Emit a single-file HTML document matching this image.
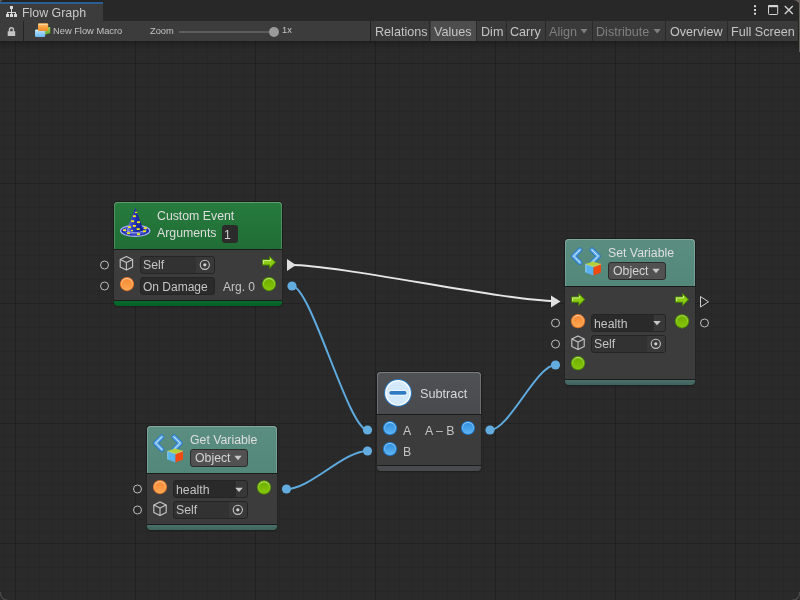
<!DOCTYPE html>
<html><head><meta charset="utf-8"><style>
*{margin:0;padding:0;box-sizing:border-box}
html,body{width:800px;height:600px;overflow:hidden;background:#282828;font-family:"Liberation Sans",sans-serif}
.a{position:absolute}
.tx{position:absolute;white-space:nowrap;will-change:transform}
#canvas{position:absolute;left:0;top:41px;width:800px;height:559px;background-color:#2a2a2a;
 background-image:
  linear-gradient(to right,#212121 1px,transparent 1px),
  linear-gradient(to bottom,#212121 1px,transparent 1px),
  linear-gradient(to right,#272727 1px,transparent 1px),
  linear-gradient(to bottom,#272727 1px,transparent 1px);
 background-size:120px 120px,120px 120px,12px 12px,12px 12px;
 background-position:15px 22px,15px 22px,3px 10px,3px 10px;}
.node{position:absolute;border-radius:4px;box-shadow:0 0 1px 0 rgba(0,0,0,.5),0 1px 2px 0 rgba(0,0,0,.25)}
.hdr{position:absolute;left:0;top:0;width:100%;border-radius:4px 4px 0 0;box-shadow:0 0 0 1px rgba(18,18,18,.5),inset 0 1px 0 rgba(255,255,255,.25),inset 1px 0 0 rgba(255,255,255,.2),inset -1px 0 0 rgba(255,255,255,.2)}
.body{position:absolute;left:0;width:100%;background:#3c3c3c;border-top:1px solid #1c1c1c;border-bottom:1px solid #1c1c1c}
.field{position:absolute;border-radius:3px;border:1px solid #252525}
.btn{position:absolute;top:21px;height:20px;background:#3a3a3a}
</style></head><body>
<div id="canvas"></div>
<div class="a" style="left:0;top:0;width:800px;height:21px;background:#282828"></div>
<div class="a" style="left:0;top:0;width:103px;height:2px;background:#242424"></div>
<div class="a" style="left:0;top:2px;width:103px;height:19px;background:#3c3c3c;border-top:2px solid #2c5f91"></div>
<svg class="a" style="left:0;top:0" width="800" height="8"><path d="M0 0 H4 A4 4 0 0 0 0 4 Z" fill="#67625e"/><path d="M800 0 H793 A7 7 0 0 1 800 7 Z" fill="#67625e"/></svg>
<div class="a" style="left:0;top:21px;width:800px;height:20px;background:#3c3c3c"></div>
<div class="a" style="left:0;top:41px;width:800px;height:10px;background:linear-gradient(rgba(0,0,0,.28),rgba(0,0,0,.12) 40%,rgba(0,0,0,0))"></div>
<div class="tx" style="left:22px;top:6.00px;font-size:12.4px;line-height:15px;color:#c8c8c8;">Flow Graph</div>
<svg class="a" style="left:0;top:0" width="20" height="20" viewBox="0 0 20 20">
 <g fill="#d8d8d8">
  <rect x="10" y="6" width="3" height="3"/><rect x="11" y="9" width="1" height="3"/>
  <rect x="7" y="12" width="9" height="1"/>
  <rect x="7" y="12" width="1" height="2"/><rect x="11" y="12" width="1" height="2"/><rect x="15" y="12" width="1" height="2"/>
  <rect x="6" y="14" width="3" height="3"/><rect x="10" y="14" width="3" height="3"/><rect x="14" y="14" width="3" height="3"/>
 </g>
</svg>
<svg class="a" style="left:740px;top:0" width="60" height="21" viewBox="0 0 60 21">
 <g fill="#d4d4d4"><rect x="14" y="5.2" width="2" height="2"/><rect x="14" y="9" width="2" height="2"/><rect x="14" y="12.7" width="2" height="2"/></g>
 <rect x="28.5" y="5.5" width="9.2" height="9" rx="0.8" fill="none" stroke="#d4d4d4" stroke-width="1"/>
 <rect x="28.3" y="5" width="9.6" height="2.2" fill="#d4d4d4"/>
 <path d="M44.8 6 L52.8 14 M52.8 6 L44.8 14" stroke="#d4d4d4" stroke-width="1.3"/>
</svg>
<div class="a" style="left:23px;top:21px;width:1px;height:20px;background:#232323"></div>
<svg class="a" style="left:0;top:20px" width="24" height="20" viewBox="0 0 24 20">
 <path d="M9.52 11.4 V9.6 A1.93 1.93 0 0 1 13.38 9.6 V11.4" fill="none" stroke="#c4c4c4" stroke-width="1.45"/>
 <rect x="7.7" y="11.2" width="7.5" height="4.8" fill="#c4c4c4"/>
</svg>
<svg class="a" style="left:30px;top:20px" width="24" height="20" viewBox="0 0 24 20">
 <defs>
  <linearGradient id="mO" x1="0" y1="0" x2="0" y2="1"><stop offset="0" stop-color="#ffc068"/><stop offset="1" stop-color="#f08a20"/></linearGradient>
  <linearGradient id="mB" x1="0" y1="0" x2="0" y2="1"><stop offset="0" stop-color="#c0e4ff"/><stop offset="1" stop-color="#6ab8f4"/></linearGradient>
  <linearGradient id="mG" x1="0" y1="0" x2="0" y2="1"><stop offset="0" stop-color="#a8dc60"/><stop offset="1" stop-color="#5ea828"/></linearGradient>
 </defs>
 <path d="M14.5 8 L20.2 7 V13.2 L14.5 14.8 Z" fill="url(#mG)"/>
 <rect x="5" y="9.4" width="10.2" height="7.6" rx="1.2" fill="url(#mB)"/>
 <path d="M5.5 10.6 H14.6" stroke="#e0f2ff" stroke-width="0.8"/>
 <rect x="8" y="3.2" width="10.2" height="7.8" rx="1.2" fill="url(#mO)"/>
 <path d="M8.6 4.6 H17.6" stroke="#ffe0b0" stroke-width="0.8"/>
</svg>
<div class="tx" style="left:53.3px;top:26.08px;font-size:9.3px;line-height:11px;color:#c4c4c4;">New Flow Macro</div>
<div class="tx" style="left:150px;top:26.08px;font-size:9.3px;line-height:11px;color:#c4c4c4;">Zoom</div>
<div class="a" style="left:179px;top:31px;width:94px;height:2px;background:#5c5c5c"></div>
<div class="a" style="left:269px;top:27px;width:10px;height:10px;background:#9a9a9a;border-radius:50%"></div>
<div class="tx" style="left:281.8px;top:25.28px;font-size:9.3px;line-height:11px;color:#c4c4c4;">1x</div>
<div class="a" style="left:370px;top:21px;width:1px;height:20px;background:#232323"></div>
<div class="btn" style="left:371px;width:58px;background:#3a3a3a"></div>
<div class="a" style="left:429px;top:21px;width:1px;height:20px;background:#2a2a2a"></div>
<div class="tx" style="left:374.7px;top:24.73px;font-size:12.6px;line-height:15px;color:#c4c4c4;">Relations</div>
<div class="btn" style="left:431px;width:45px;background:#4d4d4d"></div>
<div class="a" style="left:476px;top:21px;width:1px;height:20px;background:#2a2a2a"></div>
<div class="tx" style="left:434.4px;top:24.73px;font-size:12.6px;line-height:15px;color:#c4c4c4;">Values</div>
<div class="btn" style="left:477px;width:29px;background:#3a3a3a"></div>
<div class="a" style="left:506px;top:21px;width:1px;height:20px;background:#2a2a2a"></div>
<div class="tx" style="left:481.0px;top:24.73px;font-size:12.6px;line-height:15px;color:#c4c4c4;">Dim</div>
<div class="btn" style="left:507px;width:38px;background:#3a3a3a"></div>
<div class="a" style="left:545px;top:21px;width:1px;height:20px;background:#2a2a2a"></div>
<div class="tx" style="left:509.79999999999995px;top:24.73px;font-size:12.6px;line-height:15px;color:#c4c4c4;">Carry</div>
<div class="btn" style="left:546px;width:46px;background:#3a3a3a"></div>
<div class="a" style="left:592px;top:21px;width:1px;height:20px;background:#2a2a2a"></div>
<div class="tx" style="left:549.0px;top:24.73px;font-size:12.6px;line-height:15px;color:#7f7f7f;">Align</div>
<div class="btn" style="left:593px;width:72px;background:#3a3a3a"></div>
<div class="a" style="left:665px;top:21px;width:1px;height:20px;background:#2a2a2a"></div>
<div class="tx" style="left:595.8px;top:24.73px;font-size:12.6px;line-height:15px;color:#7f7f7f;">Distribute</div>
<div class="btn" style="left:666px;width:61px;background:#3a3a3a"></div>
<div class="a" style="left:727px;top:21px;width:1px;height:20px;background:#2a2a2a"></div>
<div class="tx" style="left:669.9px;top:24.73px;font-size:12.6px;line-height:15px;color:#c4c4c4;">Overview</div>
<div class="btn" style="left:728px;width:70px;background:#3a3a3a"></div>
<div class="a" style="left:798px;top:21px;width:1px;height:20px;background:#2a2a2a"></div>
<div class="tx" style="left:730.9px;top:24.73px;font-size:12.6px;line-height:15px;color:#c4c4c4;">Full Screen</div>
<div class="a" style="left:799px;top:4px;width:1px;height:48px;background:#67635f"></div>
<div class="a" style="left:798px;top:21px;width:1px;height:31px;background:#232323"></div>
<svg class="a" style="left:0;top:0" width="800" height="600"><path d="M791.5 600 A7 7 0 0 0 799.5 592" fill="none" stroke="#4a4a4a" stroke-width="1.2"/><path d="M0.5 592 A7 7 0 0 0 7.5 600" fill="none" stroke="#4a4a4a" stroke-width="1.2"/></svg>
<svg class="a" style="left:0;top:0" width="800" height="42"><path d="M580.5 29 H587.5 L584 33.5 Z M653.5 29 H660.8 L657.2 33.5 Z" fill="#7f7f7f"/></svg>
<svg class="a" style="left:0;top:0" width="800" height="600" viewBox="0 0 800 600">
 <path d="M291 265 C 340 265, 506 301, 555 301" fill="none" stroke="#e6e6e6" stroke-width="2"/>
 <path d="M292 286 C 311 286, 348.5 430, 367.5 430" fill="none" stroke="#5fabe0" stroke-width="2"/>
 <path d="M286.5 489 C 310.5 489, 343.5 451, 367.5 451" fill="none" stroke="#5fabe0" stroke-width="2"/>
 <path d="M490 430 C 509 430, 536.5 365, 555.5 365" fill="none" stroke="#5fabe0" stroke-width="2"/>
 <g fill="#62ace0">
 <circle cx="292" cy="286" r="4.6"/><circle cx="367.5" cy="430" r="4.6"/><circle cx="286.5" cy="489" r="4.6"/>
 <circle cx="367.5" cy="451" r="4.6"/><circle cx="490" cy="430" r="4.6"/><circle cx="555.5" cy="365" r="4.6"/>
 </g>
 <path d="M287 259 L296 265 L287 271 Z" fill="#e0e0e0"/>
 <path d="M551 295.5 L560.5 301.5 L551 307.5 Z" fill="#e0e0e0"/>
 <path d="M700.5 296.5 L708.5 301.8 L700.5 307 Z" fill="none" stroke="#cfcfcf" stroke-width="1"/>
 <g fill="none" stroke="#bdbdbd" stroke-width="1">
  <circle cx="104.5" cy="265" r="4"/><circle cx="104.5" cy="286" r="4"/>
  <circle cx="555.5" cy="323" r="4"/><circle cx="555.5" cy="344" r="4"/>
  <circle cx="704.5" cy="323" r="4"/>
  <circle cx="137.5" cy="489" r="4"/><circle cx="137.5" cy="510" r="4"/>
 </g>
</svg>
<div class="node" style="left:114px;top:202px;width:168px;height:104px"><div class="hdr" style="height:47px;background:linear-gradient(#277b3d,#206e36)"></div><div class="body" style="top:47px;height:52px"></div><div class="a" style="left:0;top:99px;width:100%;height:5px;background:linear-gradient(#066c2d,#036027);border-radius:0 0 4px 4px"></div></div>
<div class="tx" style="left:157px;top:209.24px;font-size:12.3px;line-height:15px;color:#dedede;">Custom Event</div>
<div class="tx" style="left:157px;top:226.24px;font-size:12.3px;line-height:15px;color:#dedede;">Arguments</div>
<div class="a" style="left:222px;top:225px;width:16px;height:18px;background:#2b2b2b;border-radius:3px"></div>
<div class="tx" style="left:224px;top:228.24px;font-size:12.3px;line-height:15px;color:#d0d0d0;">1</div>
<div class="field" style="left:140px;top:256px;width:75px;height:18px;background:#323232"></div>
<div class="a" style="left:196px;top:257px;width:18px;height:16px;background:#393939;border-radius:0 2px 2px 0"></div>
<div class="tx" style="left:142.6px;top:258.04px;font-size:12.3px;line-height:15px;color:#c4c4c4;">Self</div>
<div class="field" style="left:140px;top:277px;width:75px;height:18px;background:#2b2b2b"></div>
<div class="tx" style="left:142.9px;top:279.84px;font-size:12px;line-height:14px;color:#c4c4c4;">On Damage</div>
<div class="tx" style="left:223.3px;top:280.14px;font-size:12px;line-height:14px;color:#c4c4c4;">Arg. 0</div>
<div class="node" style="left:565px;top:239px;width:130px;height:146px"><div class="hdr" style="height:47px;background:linear-gradient(#5b8e80,#528779)"></div><div class="body" style="top:47px;height:94px"></div><div class="a" style="left:0;top:141px;width:100%;height:5px;background:linear-gradient(#486f68,#3f645d);border-radius:0 0 4px 4px"></div></div>
<div class="tx" style="left:607.6px;top:246.14px;font-size:12.3px;line-height:15px;color:#dedede;">Set Variable</div>
<div class="a" style="left:608px;top:262px;width:58px;height:18px;background:#515151;border:1px solid #2c2c2c;border-radius:3px"></div>
<div class="tx" style="left:612.7px;top:264.14px;font-size:12.3px;line-height:15px;color:#d4d4d4;">Object</div>
<div class="field" style="left:591px;top:314px;width:75px;height:18px;background:#383838"></div>
<div class="a" style="left:592px;top:315px;width:62px;height:16px;background:#2a2a2a;border-radius:2px"></div>
<div class="tx" style="left:594.2px;top:317.14px;font-size:12.3px;line-height:15px;color:#c4c4c4;">health</div>
<div class="field" style="left:591px;top:335px;width:75px;height:18px;background:#323232"></div>
<div class="a" style="left:647px;top:336px;width:18px;height:16px;background:#393939;border-radius:0 2px 2px 0"></div>
<div class="tx" style="left:594.2px;top:336.84px;font-size:12.3px;line-height:15px;color:#c4c4c4;">Self</div>
<div class="node" style="left:377px;top:372px;width:104px;height:99px"><div class="hdr" style="height:42px;background:linear-gradient(#4f5155,#484a4d)"></div><div class="body" style="top:42px;height:52px"></div><div class="a" style="left:0;top:94px;width:100%;height:5px;background:#494a4d;border-radius:0 0 4px 4px"></div></div>
<div class="tx" style="left:419.8px;top:387.30px;font-size:12.7px;line-height:15px;color:#d8d8d8;">Subtract</div>
<div class="tx" style="left:403.2px;top:424.24px;font-size:12.3px;line-height:15px;color:#c4c4c4;">A</div>
<div class="tx" style="left:425.2px;top:424.24px;font-size:12.3px;line-height:15px;color:#c4c4c4;">A &#8211; B</div>
<div class="tx" style="left:403.2px;top:445.24px;font-size:12.3px;line-height:15px;color:#c4c4c4;">B</div>
<div class="node" style="left:147px;top:426px;width:130px;height:104px"><div class="hdr" style="height:47px;background:linear-gradient(#5b8e80,#528779)"></div><div class="body" style="top:47px;height:52px"></div><div class="a" style="left:0;top:99px;width:100%;height:5px;background:linear-gradient(#486f68,#3f645d);border-radius:0 0 4px 4px"></div></div>
<div class="tx" style="left:190.4px;top:433.04px;font-size:12.3px;line-height:15px;color:#dedede;">Get Variable</div>
<div class="a" style="left:190px;top:449px;width:58px;height:18px;background:#515151;border:1px solid #2c2c2c;border-radius:3px"></div>
<div class="tx" style="left:194.7px;top:451.14px;font-size:12.3px;line-height:15px;color:#d4d4d4;">Object</div>
<div class="field" style="left:173px;top:480px;width:75px;height:18px;background:#383838"></div>
<div class="a" style="left:174px;top:481px;width:62px;height:16px;background:#2a2a2a;border-radius:2px"></div>
<div class="tx" style="left:176.4px;top:483.14px;font-size:12.3px;line-height:15px;color:#c4c4c4;">health</div>
<div class="field" style="left:173px;top:501px;width:75px;height:18px;background:#323232"></div>
<div class="a" style="left:229px;top:502px;width:18px;height:16px;background:#393939;border-radius:0 2px 2px 0"></div>
<div class="tx" style="left:176.4px;top:502.84px;font-size:12.3px;line-height:15px;color:#c4c4c4;">Self</div>
<!-- ===== icons ===== -->
<svg class="a" style="left:0;top:0" width="800" height="600" viewBox="0 0 800 600">
 <defs>
  <linearGradient id="gOr" x1="0" y1="0" x2="0" y2="1"><stop offset="0" stop-color="#f98a35"/><stop offset="1" stop-color="#ffa550"/></linearGradient>
  <linearGradient id="gGr" x1="0" y1="0" x2="0" y2="1"><stop offset="0" stop-color="#6fb000"/><stop offset="1" stop-color="#86c40a"/></linearGradient>
  <linearGradient id="gBl" x1="0" y1="0" x2="0" y2="1"><stop offset="0" stop-color="#3090e0"/><stop offset="1" stop-color="#5cb2f2"/></linearGradient>
  <linearGradient id="gHat" x1="0" y1="0" x2="1" y2="0"><stop offset="0" stop-color="#9098f0"/><stop offset="0.3" stop-color="#3444c0"/><stop offset="0.6" stop-color="#1c2ca8"/><stop offset="1" stop-color="#15228a"/></linearGradient>
  <linearGradient id="gRingG" x1="0" y1="0" x2="0" y2="1"><stop offset="0" stop-color="#c0ec78"/><stop offset="0.6" stop-color="#8ccc20"/><stop offset="1" stop-color="#84c410"/></linearGradient>
  <linearGradient id="gRingO" x1="0" y1="0" x2="0" y2="1"><stop offset="0" stop-color="#ffd4a8"/><stop offset="0.6" stop-color="#ffa850"/><stop offset="1" stop-color="#ffae58"/></linearGradient>
  <linearGradient id="gRingB" x1="0" y1="0" x2="0" y2="1"><stop offset="0" stop-color="#b0dcff"/><stop offset="0.6" stop-color="#60b0f0"/><stop offset="1" stop-color="#68b8f4"/></linearGradient>
  
  
  
  
  
  
  
 </defs>

 <!-- wizard hat -->
 <g>
  <ellipse cx="135.2" cy="230.8" rx="14.6" ry="5.6" fill="#2232b0" stroke="#a8b0f4" stroke-width="1.3"/>
  <ellipse cx="135.2" cy="230.3" rx="11" ry="3.6" fill="none" stroke="#7f8ae0" stroke-width="0.8"/>
  <path d="M135.3 207.8 C 133 214, 128.5 225, 126.5 231 Q 135 234.5, 144 231 C 141.5 225, 137.5 214, 135.3 207.8 Z" fill="url(#gHat)"/>
  <path d="M127 231 Q 135 234.5, 143.5 231" fill="none" stroke="#9aa0ee" stroke-width="1"/>
  <g fill="#f2ea18">
   <rect x="135" y="211.8" width="2.2" height="1.3"/>
   <rect x="132.9" y="215.3" width="3" height="1.8"/>
   <rect x="131.1" y="220.3" width="3" height="1.8"/>
   <rect x="137" y="221.3" width="3" height="1.8"/>
   <rect x="132.9" y="225" width="3" height="1.8"/>
   <rect x="128" y="226.2" width="3" height="1.8"/>
   <rect x="136.7" y="228.2" width="3" height="1.8"/>
   <rect x="123" y="229.2" width="3" height="1.8"/>
   <rect x="143.8" y="227.2" width="3" height="1.8"/>
   <rect x="131" y="230" width="2" height="1.2"/>
   <rect x="143" y="230.3" width="3" height="1.8"/>
   <rect x="127" y="232.3" width="3" height="1.8"/>
   <rect x="137" y="233.3" width="3" height="1.8"/>
  </g>
 </g>

 <!-- Custom Event body icons -->
 <g transform="translate(126.4 263)"><g fill="none" stroke="#c8c8c8" stroke-width="1.1" stroke-linejoin="round">
   <path d="M0 -6.6 L6.2 -3.6 L6.2 4 L0 7 L-6.2 4 L-6.2 -3.6 Z"/><path d="M-6.2 -3.6 L0 -0.5 L6.2 -3.6 M0 -0.5 V7"/>
  </g></g>
 <g transform="translate(127 284.1)"><g><circle r="7.1" fill="#e47428"/><circle r="6.1" fill="url(#gRingO)"/><circle r="5.2" fill="url(#gOr)"/></g></g>
 <g transform="translate(204.8 264.8)"><g><circle r="4.6" fill="none" stroke="#c8c8c8" stroke-width="1.1"/><circle r="1.6" fill="#d0d0d0"/></g></g>
 <g transform="translate(269 262.3)"><g><path d="M-6.9 -3.1 H0.1 V-6.9 L7.1 0 L0.1 6.9 V3.1 H-6.9 Z" fill="#4a8a00"/><path d="M-6.0 -2.2 H1.0 V-4.8 L5.8 0 L1.0 4.8 V2.2 H-6.0 Z" fill="#8ccc12"/><path d="M-5.6 1.4 V-1.7 H1.5 V-3.6" fill="none" stroke="#d8f49c" stroke-width="0.9"/></g></g>
 <g transform="translate(269 284.1)"><g><circle r="7.1" fill="#559400"/><circle r="6.1" fill="url(#gRingG)"/><circle r="5.2" fill="url(#gGr)"/></g></g>

 <!-- Set Variable -->
 <g transform="translate(571 247)"><g>
   <g fill="none" stroke-linecap="round" stroke-linejoin="round">
   <path d="M8.85 2.9 L2.6 9.15 L8.85 15.4 M21 2.9 L27.25 9.15 L21 15.4" stroke="#2a78c6" stroke-width="5"/>
   <path d="M8.85 2.9 L2.6 9.15 L8.85 15.4 M21 2.9 L27.25 9.15 L21 15.4" stroke="#64aee8" stroke-width="3.3"/>
   <path d="M8.85 2.9 L2.6 9.15 L8.85 15.4 M21 2.9 L27.25 9.15 L21 15.4" stroke="#e8f6ff" stroke-width="0.9" stroke-dasharray="1.2 0.9"/>
   </g>
   <path d="M14.5 17 L22 14.5 L30 17 L22.5 19.8 Z" fill="#b2d03a"/>
   <path d="M14.5 17 L22.5 19.8 V28.5 L14.5 25.6 Z" fill="#58b2ee"/>
   <path d="M22.5 19.8 L30 17 V25.6 L22.5 28.5 Z" fill="#ee4a12"/>
   <path d="M14.5 17 L22.5 19.8 L30 17" fill="none" stroke="#dcea90" stroke-width="0.6"/>
   <path d="M14.8 17.5 V25.4" stroke="#a8e0ff" stroke-width="0.7"/>
  </g></g>
 <path d="M652.3 268.7 H659.7 L656 273.3 Z" fill="#c8c8c8"/>
 <g transform="translate(578.2 299.6)"><g><path d="M-6.9 -3.1 H0.1 V-6.9 L7.1 0 L0.1 6.9 V3.1 H-6.9 Z" fill="#4a8a00"/><path d="M-6.0 -2.2 H1.0 V-4.8 L5.8 0 L1.0 4.8 V2.2 H-6.0 Z" fill="#8ccc12"/><path d="M-5.6 1.4 V-1.7 H1.5 V-3.6" fill="none" stroke="#d8f49c" stroke-width="0.9"/></g></g>
 <g transform="translate(682 299.6)"><g><path d="M-6.9 -3.1 H0.1 V-6.9 L7.1 0 L0.1 6.9 V3.1 H-6.9 Z" fill="#4a8a00"/><path d="M-6.0 -2.2 H1.0 V-4.8 L5.8 0 L1.0 4.8 V2.2 H-6.0 Z" fill="#8ccc12"/><path d="M-5.6 1.4 V-1.7 H1.5 V-3.6" fill="none" stroke="#d8f49c" stroke-width="0.9"/></g></g>
 <g transform="translate(578 321.2)"><g><circle r="7.1" fill="#e47428"/><circle r="6.1" fill="url(#gRingO)"/><circle r="5.2" fill="url(#gOr)"/></g></g>
 <g transform="translate(578 342.5)"><g fill="none" stroke="#c8c8c8" stroke-width="1.1" stroke-linejoin="round">
   <path d="M0 -6.6 L6.2 -3.6 L6.2 4 L0 7 L-6.2 4 L-6.2 -3.6 Z"/><path d="M-6.2 -3.6 L0 -0.5 L6.2 -3.6 M0 -0.5 V7"/>
  </g></g>
 <g transform="translate(578 363.2)"><g><circle r="7.1" fill="#559400"/><circle r="6.1" fill="url(#gRingG)"/><circle r="5.2" fill="url(#gGr)"/></g></g>
 <g transform="translate(682 321.3)"><g><circle r="7.1" fill="#559400"/><circle r="6.1" fill="url(#gRingG)"/><circle r="5.2" fill="url(#gGr)"/></g></g>
 <path d="M653.2 321 H660.8 L657 325.3 Z" fill="#c8c8c8"/>
 <g transform="translate(655.8 343.8)"><g><circle r="4.6" fill="none" stroke="#c8c8c8" stroke-width="1.1"/><circle r="1.6" fill="#d0d0d0"/></g></g>

 <!-- Subtract -->
 <circle cx="398" cy="392.9" r="13.9" fill="#2a78c0"/>
 <circle cx="398" cy="392.9" r="12.9" fill="#ffffff"/>
 <circle cx="398" cy="392.9" r="11.6" fill="#d4eafc"/>
 <rect x="388.4" y="390.4" width="19" height="5" rx="2.5" fill="#ffffff"/>
 <rect x="389.2" y="391.1" width="17.4" height="3.6" rx="1.8" fill="#2f7cc4"/>
 <g transform="translate(390 428.2)"><g><circle r="7.1" fill="#1e78c8"/><circle r="6.1" fill="url(#gRingB)"/><circle r="5.2" fill="url(#gBl)"/></g></g>
 <g transform="translate(390 449)"><g><circle r="7.1" fill="#1e78c8"/><circle r="6.1" fill="url(#gRingB)"/><circle r="5.2" fill="url(#gBl)"/></g></g>
 <g transform="translate(468 428)"><g><circle r="7.1" fill="#1e78c8"/><circle r="6.1" fill="url(#gRingB)"/><circle r="5.2" fill="url(#gBl)"/></g></g>

 <!-- Get Variable -->
 <g transform="translate(153 434)"><g>
   <g fill="none" stroke-linecap="round" stroke-linejoin="round">
   <path d="M8.85 2.9 L2.6 9.15 L8.85 15.4 M21 2.9 L27.25 9.15 L21 15.4" stroke="#2a78c6" stroke-width="5"/>
   <path d="M8.85 2.9 L2.6 9.15 L8.85 15.4 M21 2.9 L27.25 9.15 L21 15.4" stroke="#64aee8" stroke-width="3.3"/>
   <path d="M8.85 2.9 L2.6 9.15 L8.85 15.4 M21 2.9 L27.25 9.15 L21 15.4" stroke="#e8f6ff" stroke-width="0.9" stroke-dasharray="1.2 0.9"/>
   </g>
   <path d="M14.5 17 L22 14.5 L30 17 L22.5 19.8 Z" fill="#b2d03a"/>
   <path d="M14.5 17 L22.5 19.8 V28.5 L14.5 25.6 Z" fill="#58b2ee"/>
   <path d="M22.5 19.8 L30 17 V25.6 L22.5 28.5 Z" fill="#ee4a12"/>
   <path d="M14.5 17 L22.5 19.8 L30 17" fill="none" stroke="#dcea90" stroke-width="0.6"/>
   <path d="M14.8 17.5 V25.4" stroke="#a8e0ff" stroke-width="0.7"/>
  </g></g>
 <path d="M234.3 455.7 H241.7 L238 460.3 Z" fill="#c8c8c8"/>
 <g transform="translate(160 487.1)"><g><circle r="7.1" fill="#e47428"/><circle r="6.1" fill="url(#gRingO)"/><circle r="5.2" fill="url(#gOr)"/></g></g>
 <g transform="translate(160 508.5)"><g fill="none" stroke="#c8c8c8" stroke-width="1.1" stroke-linejoin="round">
   <path d="M0 -6.6 L6.2 -3.6 L6.2 4 L0 7 L-6.2 4 L-6.2 -3.6 Z"/><path d="M-6.2 -3.6 L0 -0.5 L6.2 -3.6 M0 -0.5 V7"/>
  </g></g>
 <g transform="translate(264 487.4)"><g><circle r="7.1" fill="#559400"/><circle r="6.1" fill="url(#gRingG)"/><circle r="5.2" fill="url(#gGr)"/></g></g>
 <path d="M235.2 487.8 H242.8 L239 492 Z" fill="#c8c8c8"/>
 <g transform="translate(237.8 509.8)"><g><circle r="4.6" fill="none" stroke="#c8c8c8" stroke-width="1.1"/><circle r="1.6" fill="#d0d0d0"/></g></g>
</svg>
</body></html>
